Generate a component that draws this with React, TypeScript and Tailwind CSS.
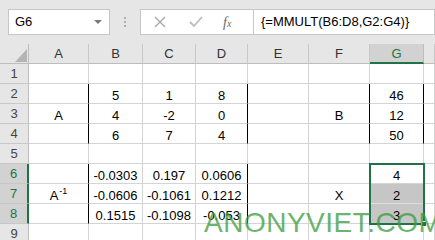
const widths = ["w-[60px]", "w-[54px]", "w-[53px]", "w-[52px]", "w-[61px]", "w-[61px]", "w-[54px]", "flex-1"]
const cols = ["A", "B", "C", "D", "E", "F", "G", "H"]

type Row = { n: number; cells: (React.ReactNode | null)[]; black?: number[] }

const rows: Row[] = [
    { n: 1, cells: [] },
    { n: 2, cells: [null, "5", "1", "8", null, null, "46"], black: [0, 3, 5, 6] },
    { n: 3, cells: ["A", "4", "-2", "0", null, "B", "12"], black: [0, 3, 5, 6] },
    { n: 4, cells: [null, "6", "7", "4", null, null, "50"], black: [0, 3, 5, 6] },
    { n: 5, cells: [] },
    { n: 6, cells: [null, "-0.0303", "0.197", "0.0606", null, null, "4"], black: [0, 3] },
    {
        n: 7,
        cells: [
            <span>A<sup className="relative -top-[6px] text-[9px] ml-px">-1</sup></span>,
            "-0.0606", "-0.1061", "0.1212", null, "X", "2",
        ],
        black: [0, 3],
    },
    { n: 8, cells: [null, "0.1515", "-0.1098", "-0.053", null, null, "3"], black: [0, 3] },
    { n: 9, cells: [] },
]

function SheetRow({ row }: { row: Row }) {
    const sel = row.n >= 6 && row.n <= 8
    return (
        <div className="flex h-[20px]">
            <div
                className={
                    "w-[29px] flex items-center justify-center border-b border-b-[#c8c8c8] " +
                    (sel
                        ? "bg-[#d2d2d2] text-[#217346] border-r-2 border-r-[#217346]"
                        : "bg-[#e6e6e6] text-[#444] border-r border-r-[#bdbdbd]")
                }
            >
                {row.n}
            </div>
            {cols.map((c, i) => {
                const isBlack = row.black?.includes(i)
                const shaded = i === 6 && (row.n === 7 || row.n === 8)
                return (
                    <div
                        key={c}
                        className={
                            widths[i] +
                            " relative flex items-end justify-center leading-[15px] border-b border-r " +
                            (isBlack ? "border-r-black " : "border-r-[#d4d4d4] ") +
                            (shaded ? "bg-[#c6c6c6] border-b-[#dedede]" : "border-b-[#d4d4d4]")
                        }
                    >
                        {row.cells[i]}
                        {i === 6 && row.n === 6 && (
                            <div className="absolute -left-[1px] -top-[1px] w-[56px] h-[62px] border-2 border-[#217346] z-10">
                                <div className="absolute -right-[4px] -bottom-[4px] w-[6px] h-[6px] bg-[#217346] border border-white" />
                            </div>
                        )}
                    </div>
                )
            })}
        </div>
    )
}

export default function App() {
    return (
        <div
            className="relative w-[435px] h-[240px] overflow-hidden bg-white text-[13px] text-black"
            style={{ fontFamily: '"Liberation Sans", Arial, sans-serif' }}
        >
            {/* formula bar */}
            <div className="h-[44px] bg-[#e6e6e6] flex items-start pt-[9px] pl-[8px]">
                <div className="w-[102px] h-[26px] bg-white border border-[#c6c6c6] flex items-center justify-between pl-[6px] pr-[7px]">
                    <span>G6</span>
                    <svg width="8" height="5" viewBox="0 0 8 5">
                        <path d="M0 0 L8 0 L4 4 Z" fill="#7a7a7a" />
                    </svg>
                </div>
                <div className="w-[30px] h-[26px] flex flex-col items-center justify-center gap-[2px]">
                    <div className="w-[2px] h-[2px] bg-[#b0b0b0]" />
                    <div className="w-[2px] h-[2px] bg-[#b0b0b0]" />
                    <div className="w-[2px] h-[2px] bg-[#b0b0b0]" />
                </div>
                <div className="w-[113px] h-[26px] bg-white border border-[#c6c6c6] border-r-0 flex items-center">
                    <svg width="12" height="12" viewBox="0 0 12 12" className="ml-[13px]">
                        <path d="M1 1 L11 11 M11 1 L1 11" stroke="#a8a8a8" strokeWidth="1.4" />
                    </svg>
                    <svg width="14" height="12" viewBox="0 0 14 12" className="ml-[23px]">
                        <path d="M1 6 L5 10 L13 1" stroke="#bcbcbc" strokeWidth="1.8" fill="none" />
                    </svg>
                    <span
                        className="ml-[20px] italic text-[#6a6a6a] text-[14px]"
                        style={{ fontFamily: '"Liberation Serif", serif' }}
                    >
                        f<span className="text-[10px]">x</span>
                    </span>
                </div>
                <div className="flex-1 h-[26px] bg-white border border-[#c6c6c6] flex items-center pl-[7px]">
                    {"{=MMULT(B6:D8,G2:G4)}"}
                </div>
            </div>

            {/* column headers */}
            <div className="flex h-[20px] bg-[#e6e6e6] text-[#333]">
                <div className="w-[29px] border-r border-b border-[#bdbdbd] relative">
                    <svg width="12" height="13" viewBox="0 0 12 13" className="absolute left-[15px] top-[5px]">
                        <path d="M12 0 L12 13 L0 13 Z" fill="#b4b4b4" />
                    </svg>
                </div>
                {cols.map((c, i) =>
                    c === "G" ? (
                        <div
                            key={c}
                            className={widths[i] + " flex items-center justify-center pt-px bg-[#d2d2d2] text-[#217346] border-r border-r-[#bdbdbd] border-b-2 border-b-[#217346]"}
                        >
                            {c}
                        </div>
                    ) : (
                        <div
                            key={c}
                            className={widths[i] + " flex items-center justify-center pt-px border-r border-r-[#c8c8c8] border-b border-b-[#bdbdbd]"}
                        >
                            {c === "H" ? "" : c}
                        </div>
                    )
                )}
            </div>

            {rows.map((r) => (
                <SheetRow key={r.n} row={r} />
            ))}

            {/* watermark */}
            <div className="absolute left-[204px] top-[207px] text-[28px] leading-[32px] text-[#3a9c3a] opacity-75 z-20 tracking-[0.5px]">
                ANONYVIET.COM
            </div>
        </div>
    )
}
